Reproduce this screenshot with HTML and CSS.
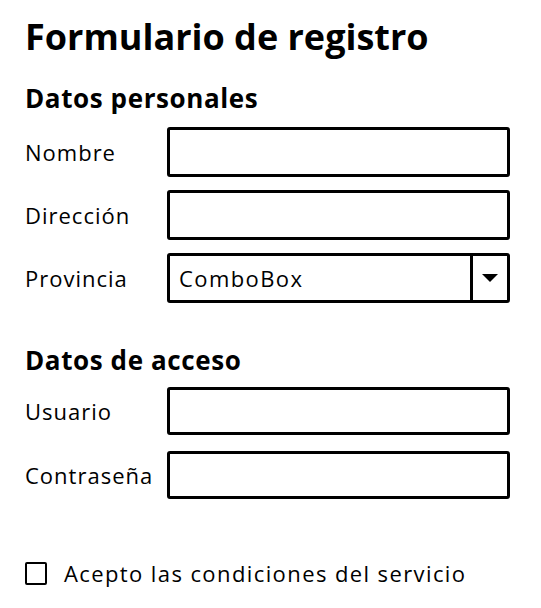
FILE: index.html
```html
<!DOCTYPE html>
<html lang="es">
<head>
<meta charset="utf-8">
<title>Formulario de registro</title>
<link rel="stylesheet" href="styles.css">
</head>
<body>
<main class="form">
  <h1 class="title">Formulario de registro</h1>

  <h2 class="section">Datos personales</h2>
  <div class="rows rows-personal">
    <div class="row"><span class="label">Nombre</span><div class="box"></div></div>
    <div class="row"><span class="label">Dirección</span><div class="box"></div></div>
    <div class="row"><span class="label">Provincia</span>
      <div class="box combo">
        <span class="combo-text">ComboBox</span>
        <span class="combo-btn"><span class="arrow"></span></span>
      </div>
    </div>
  </div>

  <h2 class="section section-access">Datos de acceso</h2>
  <div class="rows rows-access">
    <div class="row row-short"><span class="label">Usuario</span><div class="box"></div></div>
    <div class="row row-short"><span class="label">Contraseña</span><div class="box"></div></div>
  </div>

  <label class="check">
    <span class="check-box"></span>
    <span class="check-text">Acepto las condiciones del servicio</span>
  </label>
</main>
</body>
</html>
```

FILE: styles.css
```css
html, body {
  margin: 0;
  padding: 0;
  background: #fff;
  color: #000;
}
.form {
  padding: 14px 0 0 25px;
  font-family: "Open Sans", Lato, sans-serif;
}
.title {
  margin: 0;
  font-size: 36px;
  line-height: 46px;
  font-weight: 700;
}
.section {
  margin: 22px 0 0 0;
  font-size: 26px;
  line-height: 32px;
  font-weight: 700;
  letter-spacing: 0.6px;
}
.section-access {
  margin-top: 41px;
}
.rows {
  display: flex;
  flex-direction: column;
  gap: 13px;
}
.rows-personal { margin-top: 13px; }
.rows-access { margin-top: 11px; gap: 16px; }
.row {
  display: flex;
  align-items: center;
  height: 50px;
}
.row-short { height: 48px; }
.label {
  width: 142px;
  font-size: 22px;
  letter-spacing: 1px;
  flex: none;
}
.box {
  box-sizing: border-box;
  width: 343px;
  height: 100%;
  border: 3px solid #000;
  border-radius: 3px;
}
.combo {
  display: flex;
  align-items: center;
}
.combo-text {
  flex: 1;
  padding-left: 9px;
  font-size: 22px;
  letter-spacing: 1.4px;
}
.combo-btn {
  width: 34px;
  height: 100%;
  border-left: 3px solid #000;
  display: flex;
  align-items: center;
  justify-content: center;
}
.arrow {
  width: 0;
  height: 0;
  border-left: 8px solid transparent;
  border-right: 8px solid transparent;
  border-top: 8px solid #000;
}
.check {
  display: flex;
  align-items: center;
  margin-top: 59px;
  gap: 17px;
}
.check-box {
  box-sizing: border-box;
  width: 22px;
  height: 23px;
  border: 2.5px solid #000;
  border-radius: 2px;
  flex: none;
}
.check-text {
  font-size: 22px;
  letter-spacing: 1.4px;
}
```
